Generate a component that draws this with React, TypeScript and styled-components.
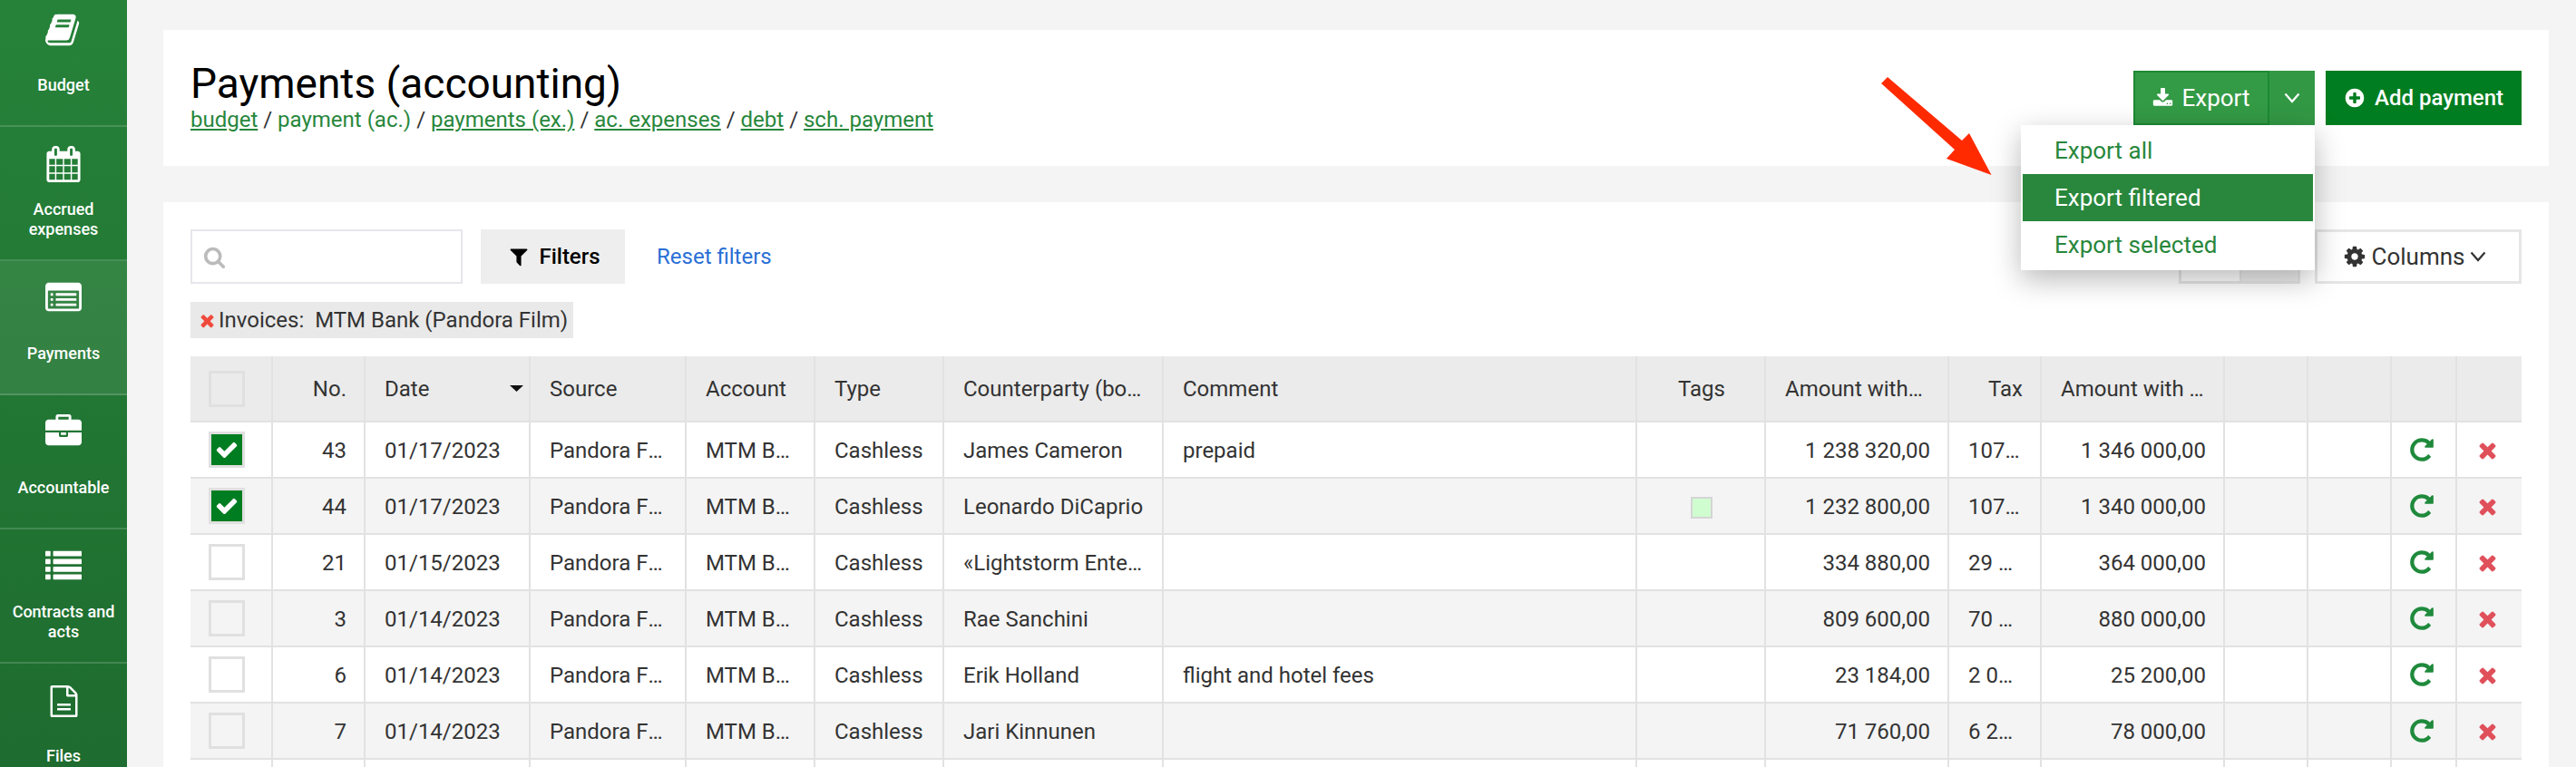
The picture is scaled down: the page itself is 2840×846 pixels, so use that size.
import styled, { createGlobalStyle } from "styled-components";

const GREEN = "#007d20";
const LINK = "#28873c";
const LINE = "#e2e2e2";

const ICONS = {
    book: "M1639 478q40 57 18 129l-275 906q-19 64-76.5 107.5t-122.5 43.5h-923q-77 0-148.5-53.5t-99.5-131.5q-24-67-2-127 0-4 3-27t4-37q1-8-3-21.5t-3-19.5q2-11 8-21t16.5-23.5 16.5-23.5q23-38 45-91.5t30-91.5q3-10 .5-30t-.5-28q3-11 17-28t17-23q21-36 42-92t25-90q1-9-2.5-32t.5-28q4-13 22-30.5t22-22.5q19-26 42.5-84.5t27.5-96.5q1-8-3-25.5t-2-26.5q2-8 9-18t18-23 17-21q8-12 16.5-30.5t15-35 16-36 19.5-32 26.5-23.5 36-11.5 47.5 5.5l-1 3q38-9 51-9h761q74 0 114 56t18 130l-274 906q-36 119-71.5 153.5t-128.5 34.5h-869q-27 0-38 15-11 16-1 43 24 70 144 70h923q29 0 56-15.5t35-41.5l300-987q7-22 5-57 38 15 59 43zm-1064 2q-4 13 2 22.5t20 9.5h608q13 0 25.5-9.5t16.5-22.5l21-64q4-13-2-22.5t-20-9.5h-608q-13 0-25.5 9.5t-16.5 22.5zm-83 256q-4 13 2 22.5t20 9.5h608q13 0 25.5-9.5t16.5-22.5l21-64q4-13-2-22.5t-20-9.5h-608q-13 0-25.5 9.5t-16.5 22.5z",
    calendar: "M192 1664h288v-288h-288v288zm352 0h320v-288h-320v288zm-352-352h288v-320h-288v320zm352 0h320v-320h-320v320zm-352-384h288v-288h-288v288zm736 736h320v-288h-320v288zm-384-736h320v-288h-320v288zm768 736h288v-288h-288v288zm-384-352h320v-320h-320v320zm-352-864v-288q0-13-9.5-22.5t-22.5-9.5h-64q-13 0-22.5 9.5t-9.5 22.5v288q0 13 9.5 22.5t22.5 9.5h64q13 0 22.5-9.5t9.5-22.5zm736 864h288v-320h-288v320zm-384-384h320v-288h-320v288zm384 0h288v-288h-288v288zm32-480v-288q0-13-9.5-22.5t-22.5-9.5h-64q-13 0-22.5 9.5t-9.5 22.5v288q0 13 9.5 22.5t22.5 9.5h64q13 0 22.5-9.5t9.5-22.5zm384-64v1280q0 52-38 90t-90 38h-1408q-52 0-90-38t-38-90v-1280q0-52 38-90t90-38h128v-96q0-66 47-113t113-47h64q66 0 113 47t47 113v96h384v-96q0-66 47-113t113-47h64q66 0 113 47t47 113v96h128q52 0 90 38t38 90z",
    listAlt: "M384 1184v64q0 13-9.5 22.5t-22.5 9.5h-64q-13 0-22.5-9.5t-9.5-22.5v-64q0-13 9.5-22.5t22.5-9.5h64q13 0 22.5 9.5t9.5 22.5zm0-256v64q0 13-9.5 22.5t-22.5 9.5h-64q-13 0-22.5-9.5t-9.5-22.5v-64q0-13 9.5-22.5t22.5-9.5h64q13 0 22.5 9.5t9.5 22.5zm0-256v64q0 13-9.5 22.5t-22.5 9.5h-64q-13 0-22.5-9.5t-9.5-22.5v-64q0-13 9.5-22.5t22.5-9.5h64q13 0 22.5 9.5t9.5 22.5zm1152 512v64q0 13-9.5 22.5t-22.5 9.5h-960q-13 0-22.5-9.5t-9.5-22.5v-64q0-13 9.5-22.5t22.5-9.5h960q13 0 22.5 9.5t9.5 22.5zm0-256v64q0 13-9.5 22.5t-22.5 9.5h-960q-13 0-22.5-9.5t-9.5-22.5v-64q0-13 9.5-22.5t22.5-9.5h960q13 0 22.5 9.5t9.5 22.5zm0-256v64q0 13-9.5 22.5t-22.5 9.5h-960q-13 0-22.5-9.5t-9.5-22.5v-64q0-13 9.5-22.5t22.5-9.5h960q13 0 22.5 9.5t9.5 22.5zm128 704v-832q0-13-9.5-22.5t-22.5-9.5h-1472q-13 0-22.5 9.5t-9.5 22.5v832q0 13 9.5 22.5t22.5 9.5h1472q13 0 22.5-9.5t9.5-22.5zm128-1088v1088q0 66-47 113t-113 47h-1472q-66 0-113-47t-47-113v-1088q0-66 47-113t113-47h1472q66 0 113 47t47 113z",
    briefcase: "M640 256h512v-128h-512v128zm1152 640v480q0 66-47 113t-113 47h-1472q-66 0-113-47t-47-113v-480h672v160q0 26 19 45t45 19h320q26 0 45-19t19-45v-160h672zm-768 0v128h-256v-128h256zm768-480v384h-1792v-384q0-66 47-113t113-47h352v-160q0-40 28-68t68-28h576q40 0 68 28t28 68v160h352q66 0 113 47t47 113z",
    list: "M256 1312v192q0 13-9.5 22.5t-22.5 9.5h-192q-13 0-22.5-9.5t-9.5-22.5v-192q0-13 9.5-22.5t22.5-9.5h192q13 0 22.5 9.5t9.5 22.5zm0-384v192q0 13-9.5 22.5t-22.5 9.5h-192q-13 0-22.5-9.5t-9.5-22.5v-192q0-13 9.5-22.5t22.5-9.5h192q13 0 22.5 9.5t9.5 22.5zm0-384v192q0 13-9.5 22.5t-22.5 9.5h-192q-13 0-22.5-9.5t-9.5-22.5v-192q0-13 9.5-22.5t22.5-9.5h192q13 0 22.5 9.5t9.5 22.5zm1536 768v192q0 13-9.5 22.5t-22.5 9.5h-1344q-13 0-22.5-9.5t-9.5-22.5v-192q0-13 9.5-22.5t22.5-9.5h1344q13 0 22.5 9.5t9.5 22.5zm-1536-1152v192q0 13-9.5 22.5t-22.5 9.5h-192q-13 0-22.5-9.5t-9.5-22.5v-192q0-13 9.5-22.5t22.5-9.5h192q13 0 22.5 9.5t9.5 22.5zm1536 768v192q0 13-9.5 22.5t-22.5 9.5h-1344q-13 0-22.5-9.5t-9.5-22.5v-192q0-13 9.5-22.5t22.5-9.5h1344q13 0 22.5 9.5t9.5 22.5zm0-384v192q0 13-9.5 22.5t-22.5 9.5h-1344q-13 0-22.5-9.5t-9.5-22.5v-192q0-13 9.5-22.5t22.5-9.5h1344q13 0 22.5 9.5t9.5 22.5zm0-384v192q0 13-9.5 22.5t-22.5 9.5h-1344q-13 0-22.5-9.5t-9.5-22.5v-192q0-13 9.5-22.5t22.5-9.5h1344q13 0 22.5 9.5t9.5 22.5z",
    file: "M1596 380q28 28 48 76t20 88v1152q0 40-28 68t-68 28h-1344q-40 0-68-28t-28-68v-1600q0-40 28-68t68-28h896q40 0 88 20t76 48zm-444-244v376h376q-10-29-22-41l-313-313q-12-12-41-22zm384 1528v-1024h-416q-40 0-68-28t-28-68v-416h-768v1536h1280zm-1024-608q0-14 9-23t23-9h704q14 0 23 9t9 23v64q0 14-9 23t-23 9h-704q-14 0-23-9t-9-23v-64zm736 224q14 0 23 9t9 23v64q0 14-9 23t-23 9h-704q-14 0-23-9t-9-23v-64q0-14 9-23t23-9h704z",
    repeat: "M1664 256v448q0 26-19 45t-45 19h-448q-42 0-59-40-17-39 14-69l138-138q-148-137-349-137-104 0-198.5 40.5t-163.5 109.5-109.5 163.5-40.5 198.5 40.5 198.5 109.5 163.5 163.5 109.5 198.5 40.5q119 0 225-52t179-147q7-10 23-12 15 0 25 9l137 138q9 8 9.5 20.5t-7.5 22.5q-109 132-264 204.5t-327 72.5q-156 0-298-61t-245-164-164-245-61-298 61-298 164-245 245-164 298-61q147 0 284.5 55.5t244.5 156.5l130-129q29-31 70-14 39 17 39 59z",
    times: "M1490 1322q0 40-28 68l-136 136q-28 28-68 28t-68-28l-294-294-294 294q-28 28-68 28t-68-28l-136-136q-28-28-28-68t28-68l294-294-294-294q-28-28-28-68t28-68l136-136q28-28 68-28t68 28l294 294 294-294q28-28 68-28t68 28l136 136q28 28 28 68t-28 68l-294 294 294 294q28 28 28 68z",
    check: "M1671 566q0 40-28 68l-724 724-136 136q-28 28-68 28t-68-28l-136-136-362-362q-28-28-28-68t28-68l136-136q28-28 68-28t68 28l294 295 656-657q28-28 68-28t68 28l136 136q28 28 28 68z",
    filter: "M1595 295q17 41-14 70l-493 493v742q0 42-39 59-13 5-25 5-27 0-45-19l-256-256q-19-19-19-45v-486l-493-493q-31-29-14-70 17-39 59-39h1280q42 0 59 39z",
    search: "M1216 832q0-185-131.5-316.5t-316.5-131.5-316.5 131.5-131.5 316.5 131.5 316.5 316.5 131.5 316.5-131.5 131.5-316.5zm512 832q0 52-38 90t-90 38q-54 0-90-38l-343-342q-179 124-399 124-143 0-273.5-55.5t-225-150-150-225-55.5-273.5 55.5-273.5 150-225 225-150 273.5-55.5 273.5 55.5 225 150 150 225 55.5 273.5q0 220-124 399l343 343q37 37 37 90z",
    download: "M1344 1344q0-26-19-45t-45-19-45 19-19 45 19 45 45 19 45-19 19-45zm256 0q0-26-19-45t-45-19-45 19-19 45 19 45 45 19 45-19 19-45zm128-224v320q0 40-28 68t-68 28h-1472q-40 0-68-28t-28-68v-320q0-40 28-68t68-28h465l135 136q58 56 136 56t136-56l136-136h464q40 0 68 28t28 68zm-325-569q17 41-14 70l-448 448q-18 19-45 19t-45-19l-448-448q-31-29-14-70 17-39 59-39h256v-448q0-26 19-45t45-19h256q26 0 45 19t19 45v448h256q42 0 59 39z",
    plus: "M1344 960v-128q0-26-19-45t-45-19h-256v-256q0-26-19-45t-45-19h-128q-26 0-45 19t-19 45v256h-256q-26 0-45 19t-19 45v128q0 26 19 45t45 19h256v256q0 26 19 45t45 19h128q26 0 45-19t19-45v-256h256q26 0 45-19t19-45zm320-64q0 209-103 385.5t-279.5 279.5-385.5 103-385.5-103-279.5-279.5-103-385.5 103-385.5 279.5-279.5 385.5-103 385.5 103 279.5 279.5 103 385.5z",
    cog: "M1152 896q0-106-75-181t-181-75-181 75-75 181 75 181 181 75 181-75 75-181zm512-109v222q0 12-8 23t-20 13l-185 28q-19 54-39 91 35 50 107 138 10 12 10 25t-9 23q-27 37-99 108t-94 71q-12 0-26-9l-138-108q-44 23-91 38-16 136-29 186-7 28-36 28h-222q-14 0-24.5-8.5t-11.5-21.5l-28-184q-49-16-90-37l-141 107q-10 9-25 9-14 0-25-11-126-114-165-168-7-10-7-23 0-12 8-23 15-21 51-66.5t54-70.5q-27-50-41-99l-183-27q-13-2-21-12.5t-8-23.5v-222q0-12 8-23t19-13l186-28q14-46 39-92-40-57-107-138-10-12-10-24 0-10 9-23 26-36 98.5-107.5t94.5-71.5q13 0 26 10l138 107q44-23 91-38 16-136 29-186 7-28 36-28h222q14 0 24.5 8.5t11.5 21.5l28 184q49 16 90 37l142-107q9-9 24-9 13 0 25 10 129 119 165 170 7 8 7 22 0 12-8 23-15 21-51 66.5t-54 70.5q26 50 41 98l183 28q13 2 21 12.5t8 23.5z",
};

const GlobalStyle = createGlobalStyle`
    html, body {
        margin: 0;
        height: 100%;
        overflow: hidden;
        background: #f4f4f4;
        font-family: Roboto, "Liberation Sans", sans-serif;
        font-size: 24px;
        color: #333;
    }
    * { box-sizing: border-box; }
`;

const Page = styled.div`
    position: relative;
    display: flex;
    width: 2840px;
    height: 846px;
    overflow: hidden;
`;

const Sidebar = styled.nav`
    flex: none;
    width: 140px;
    height: 846px;
    overflow: hidden;
    background: linear-gradient(180deg, #268239 0%, #1e6c2f 100%);
`;
const SideList = styled.div`
    margin-top: -8px;
`;
const SideItem = styled.div<{ $active?: boolean }>`
    height: 148px;
    padding-top: 21px;
    display: flex;
    flex-direction: column;
    align-items: center;
    color: #fff;
    border-bottom: 2px solid rgba(255, 255, 255, 0.16);
    background: ${(p) => (p.$active ? "rgba(255, 255, 255, 0.08)" : "transparent")};
`;
const SideIcon = styled.div`
    height: 40px;
    display: flex;
    align-items: center;
`;
const SideLabel = styled.div`
    height: 62px;
    margin-top: 10px;
    display: flex;
    align-items: center;
    text-align: center;
    font-size: 18px;
    font-weight: 500;
    line-height: 22px;
`;

const Main = styled.main`
    flex: 1;
    min-width: 0;
    padding: 33px 30px 0 40px;
`;
const HeaderCard = styled.section`
    height: 150px;
    padding: 0 30px;
    display: flex;
    align-items: center;
    justify-content: space-between;
    background: #fff;
`;
const Title = styled.h1`
    margin: 0;
    padding-bottom: 2px;
    font-size: 46px;
    font-weight: 400;
    line-height: 46px;
    color: #000;
`;
const Crumbs = styled.div`
    font-size: 24px;
    line-height: 30px;
    color: #333;
`;
const CrumbLink = styled.a<{ $plain?: boolean }>`
    color: ${LINK};
    text-decoration: ${(p) => (p.$plain ? "none" : "underline")};
`;
const HeaderActions = styled.div`
    position: relative;
    display: flex;
    gap: 12px;
`;
const ExportGroup = styled.div`
    display: flex;
`;
const GreenButton = styled.button`
    width: 216px;
    height: 60px;
    padding: 0;
    display: flex;
    align-items: center;
    justify-content: center;
    gap: 10px;
    border: 0;
    background: ${GREEN};
    color: #fff;
    font: 500 24px Roboto, sans-serif;
`;
const ExportButton = styled(GreenButton)`
    width: 150px;
    gap: 9px;
    background: #339a45;
    border: 2px solid #1c8a34;
    font: 400 26px Roboto, sans-serif;
`;
const ExportToggle = styled(GreenButton)`
    width: 50px;
    background: #329844;
`;
const ExportMenu = styled.div`
    position: absolute;
    z-index: 5;
    top: 60px;
    left: -124px;
    width: 324px;
    padding: 2px;
    background: #fff;
    box-shadow: 0 10px 30px rgba(0, 0, 0, 0.28);
`;
const MenuItem = styled.div<{ $active?: boolean }>`
    height: 52px;
    padding-left: 35px;
    display: flex;
    align-items: center;
    font-size: 26px;
    color: ${(p) => (p.$active ? "#fff" : LINK)};
    background: ${(p) => (p.$active ? LINK : "transparent")};
`;

const TableCard = styled.section`
    margin-top: 40px;
    height: 640px;
    padding: 30px;
    background: #fff;
`;
const Toolbar = styled.div`
    display: flex;
    align-items: center;
`;
const SearchBox = styled.div`
    width: 300px;
    height: 60px;
    padding-left: 12px;
    display: flex;
    align-items: center;
    border: 2px solid #e6e6ec;
    background: #fff;
`;
const FilterButton = styled.button`
    width: 159px;
    height: 60px;
    margin-left: 20px;
    padding-right: 3px;
    display: flex;
    align-items: center;
    justify-content: center;
    gap: 10px;
    border: 0;
    background: #eee;
    color: #000;
    font: 500 24px Roboto, sans-serif;
`;
const ResetLink = styled.a`
    margin-left: 35px;
    color: #2a6fd6;
`;
const ViewToggle = styled.div`
    margin-left: auto;
    display: flex;
    height: 60px;
    border: 3px solid #e6e6e6;
`;
const ViewCell = styled.div<{ $on?: boolean }>`
    width: 64px;
    background: ${(p) => (p.$on ? "#eee" : "#fff")};
    & + & {
        border-left: 2px solid #e6e6e6;
    }
`;
const ColumnsButton = styled.button`
    width: 228px;
    height: 60px;
    margin-left: 16px;
    padding: 0 8px 0 0;
    display: flex;
    align-items: center;
    justify-content: center;
    gap: 6px;
    border: 3px solid #e6e6e6;
    background: #fff;
    color: #333;
    font: 400 26px Roboto, sans-serif;
`;
const FilterTag = styled.div`
    width: 422px;
    height: 40px;
    margin-top: 20px;
    padding-left: 8px;
    display: flex;
    align-items: center;
    gap: 2px;
    background: #e9e9e9;
    white-space: pre;
`;

const Table = styled.table`
    width: 2570px;
    margin-top: 20px;
    table-layout: fixed;
    border-collapse: separate;
    border-spacing: 0;
`;
const Th = styled.th<{ $align?: string }>`
    height: 73px;
    padding: 0 19px 0 21px;
    background: #ebebeb;
    border-right: 2px solid ${LINE};
    border-bottom: 2px solid ${LINE};
    font-weight: 400;
    text-align: ${(p) => p.$align ?? "left"};
    white-space: nowrap;
    overflow: hidden;
    text-overflow: ellipsis;
    &:last-child { border-right: 0; }
`;
const BoxHead = styled(Th)`
    padding: 0;
`;
const DateHead = styled(Th)`
    padding-right: 6px;
`;
const Tr = styled.tr<{ $odd: boolean }>`
    background: ${(p) => (p.$odd ? "#f4f4f4" : "#fff")};
`;
const Td = styled.td<{ $align?: string }>`
    height: 62px;
    padding: 2px 19px 0 21px;
    border-right: 2px solid ${LINE};
    border-bottom: 2px solid ${LINE};
    text-align: ${(p) => p.$align ?? "left"};
    white-space: nowrap;
    overflow: hidden;
    text-overflow: ellipsis;
    &:last-child { border-right: 0; }
`;
const SourceCell = styled(Td)`
    padding-right: 22px;
`;
const BoxCell = styled(Td)`
    padding: 0;
`;
const CheckBox = styled.div<{ $checked?: boolean }>`
    width: 40px;
    height: 40px;
    margin-left: 20px;
    display: flex;
    align-items: center;
    justify-content: center;
    border: 3px solid #e0e0e0;
    background: ${(p) => (p.$checked ? GREEN : "transparent")};
`;
const HeadInner = styled.div`
    display: flex;
    align-items: center;
    justify-content: space-between;
`;
const TagSwatch = styled.div`
    width: 24px;
    height: 24px;
    margin: 1px auto 0;
    background: #d0fdd0;
    border: 2px solid #d5d5d5;
`;
const ActionCell = styled(Td)`
    padding: 0 4px 0 0;
    line-height: 0;
`;
const ActionIcon = styled.span`
    display: flex;
    justify-content: center;
`;
const Arrow = styled.svg`
    position: absolute;
    z-index: 6;
    left: 2060px;
    top: 70px;
    pointer-events: none;
`;

const Icon = ({ d, size = 24, color = "currentColor" }: { d: string; size?: number; color?: string }) => (
    <svg width={size} height={size} viewBox="0 0 1792 1792" fill={color} style={{ flex: "none" }}>
        <path d={d} fillRule="evenodd" />
    </svg>
);

const Chevron = ({ color = "currentColor" }: { color?: string }) => (
    <svg width={18} height={12} viewBox="0 0 18 12" fill="none" stroke={color} strokeWidth="2.2" style={{ flex: "none" }}>
        <path d="M1.5 1.5 9 10l7.5-8.5" />
    </svg>
);

const SIDE_ITEMS = [
    { label: "Budget", icon: ICONS.book, size: 40 },
    { label: "Accrued expenses", icon: ICONS.calendar, size: 40 },
    { label: "Payments", icon: ICONS.listAlt, size: 40, active: true },
    { label: "Accountable", icon: ICONS.briefcase, size: 40 },
    { label: "Contracts and acts", icon: ICONS.list, size: 40 },
    { label: "Files", icon: ICONS.file, size: 35 },
];

const COL_WIDTHS = [91, 102, 182, 172, 142, 142, 242, 522, 142, 202, 102, 202, 92, 92, 72, 71];

const ROWS = [
    { no: "43", date: "01/17/2023", name: "James Cameron", comment: "prepaid", net: "1 238 320,00", tax: "107 680,00", total: "1 346 000,00", checked: true },
    { no: "44", date: "01/17/2023", name: "Leonardo DiCaprio", comment: "", net: "1 232 800,00", tax: "107 200,00", total: "1 340 000,00", checked: true, tag: true },
    { no: "21", date: "01/15/2023", name: "«Lightstorm Entertainment»", comment: "", net: "334 880,00", tax: "29 120,00", total: "364 000,00" },
    { no: "3", date: "01/14/2023", name: "Rae Sanchini", comment: "", net: "809 600,00", tax: "70 400,00", total: "880 000,00" },
    { no: "6", date: "01/14/2023", name: "Erik Holland", comment: "flight and hotel fees", net: "23 184,00", tax: "2 016,00", total: "25 200,00" },
    { no: "7", date: "01/14/2023", name: "Jari Kinnunen", comment: "", net: "71 760,00", tax: "6 240,00", total: "78 000,00" },
];

const App = () => {
    return (
        <Page>
            <GlobalStyle />
            <Sidebar>
                <SideList>
                    {SIDE_ITEMS.map((item) => (
                        <SideItem key={item.label} $active={item.active}>
                            <SideIcon><Icon d={item.icon} size={item.size} /></SideIcon>
                            <SideLabel>{item.label}</SideLabel>
                        </SideItem>
                    ))}
                </SideList>
            </Sidebar>
            <Main>
                <HeaderCard>
                    <div>
                        <Title>Payments (accounting)</Title>
                        <Crumbs>
                            <CrumbLink>budget</CrumbLink> / <CrumbLink $plain>payment (ac.)</CrumbLink> / <CrumbLink>payments (ex.)</CrumbLink> / <CrumbLink>ac. expenses</CrumbLink> / <CrumbLink>debt</CrumbLink> / <CrumbLink>sch. payment</CrumbLink>
                        </Crumbs>
                    </div>
                    <HeaderActions>
                        <ExportGroup>
                            <ExportButton><Icon d={ICONS.download} size={23} />Export</ExportButton>
                            <ExportToggle><Chevron /></ExportToggle>
                        </ExportGroup>
                        <GreenButton><Icon d={ICONS.plus} size={24} />Add payment</GreenButton>
                        <ExportMenu>
                            <MenuItem>Export all</MenuItem>
                            <MenuItem $active>Export filtered</MenuItem>
                            <MenuItem>Export selected</MenuItem>
                        </ExportMenu>
                    </HeaderActions>
                </HeaderCard>
                <TableCard>
                    <Toolbar>
                        <SearchBox><Icon d={ICONS.search} size={25} color="#bbb" /></SearchBox>
                        <FilterButton><Icon d={ICONS.filter} size={24} />Filters</FilterButton>
                        <ResetLink>Reset filters</ResetLink>
                        <ViewToggle>
                            <ViewCell />
                            <ViewCell $on />
                        </ViewToggle>
                        <ColumnsButton><Icon d={ICONS.cog} size={26} />Columns<Chevron /></ColumnsButton>
                    </Toolbar>
                    <FilterTag>
                        <Icon d={ICONS.times} size={21} color="#f04a3c" />
                        Invoices:  MTM Bank (Pandora Film)
                    </FilterTag>
                    <Table>
                        <colgroup>
                            {COL_WIDTHS.map((w, i) => <col key={i} width={w} />)}
                        </colgroup>
                        <thead>
                            <tr>
                                <BoxHead><CheckBox /></BoxHead>
                                <Th $align="right">No.</Th>
                                <DateHead>
                                    <HeadInner>
                                        Date
                                        <svg width="15" height="7" viewBox="0 0 15 7" fill="#111"><path d="M0 0h15L7.5 7z" /></svg>
                                    </HeadInner>
                                </DateHead>
                                <Th>Source</Th>
                                <Th>Account</Th>
                                <Th>Type</Th>
                                <Th>Counterparty (booking)</Th>
                                <Th>Comment</Th>
                                <Th $align="center">Tags</Th>
                                <Th $align="right">Amount without tax</Th>
                                <Th $align="right">Tax</Th>
                                <Th $align="right">Amount with tax</Th>
                                <Th />
                                <Th />
                                <Th />
                                <Th />
                            </tr>
                        </thead>
                        <tbody>
                            {ROWS.map((row, i) => (
                                <Tr key={row.no} $odd={i % 2 === 1}>
                                    <BoxCell>
                                        <CheckBox $checked={row.checked}>
                                            {row.checked && <Icon d={ICONS.check} size={26} color="#fff" />}
                                        </CheckBox>
                                    </BoxCell>
                                    <Td $align="right">{row.no}</Td>
                                    <Td>{row.date}</Td>
                                    <SourceCell>Pandora Film</SourceCell>
                                    <Td>MTM Bank</Td>
                                    <Td>Cashless</Td>
                                    <Td>{row.name}</Td>
                                    <Td>{row.comment}</Td>
                                    <Td>{row.tag && <TagSwatch />}</Td>
                                    <Td $align="right">{row.net}</Td>
                                    <Td>{row.tax}</Td>
                                    <Td $align="right">{row.total}</Td>
                                    <Td />
                                    <Td />
                                    <ActionCell><ActionIcon><Icon d={ICONS.repeat} size={30} color="#1f8a3c" /></ActionIcon></ActionCell>
                                    <ActionCell><ActionIcon><Icon d={ICONS.times} size={27} color="#e0505a" /></ActionIcon></ActionCell>
                                </Tr>
                            ))}
                            <Tr $odd={false}>
                                {COL_WIDTHS.map((_, i) => <Td key={i} />)}
                            </Tr>
                        </tbody>
                    </Table>
                </TableCard>
            </Main>
            <Arrow width="150" height="130" viewBox="2060 70 150 130" fill="#ff2a00">
                <path d="M2074 92 2081 85 2163 155 2171 147 2195.5 193 2146 175 2155 165z" />
            </Arrow>
        </Page>
    );
};

export default App;
